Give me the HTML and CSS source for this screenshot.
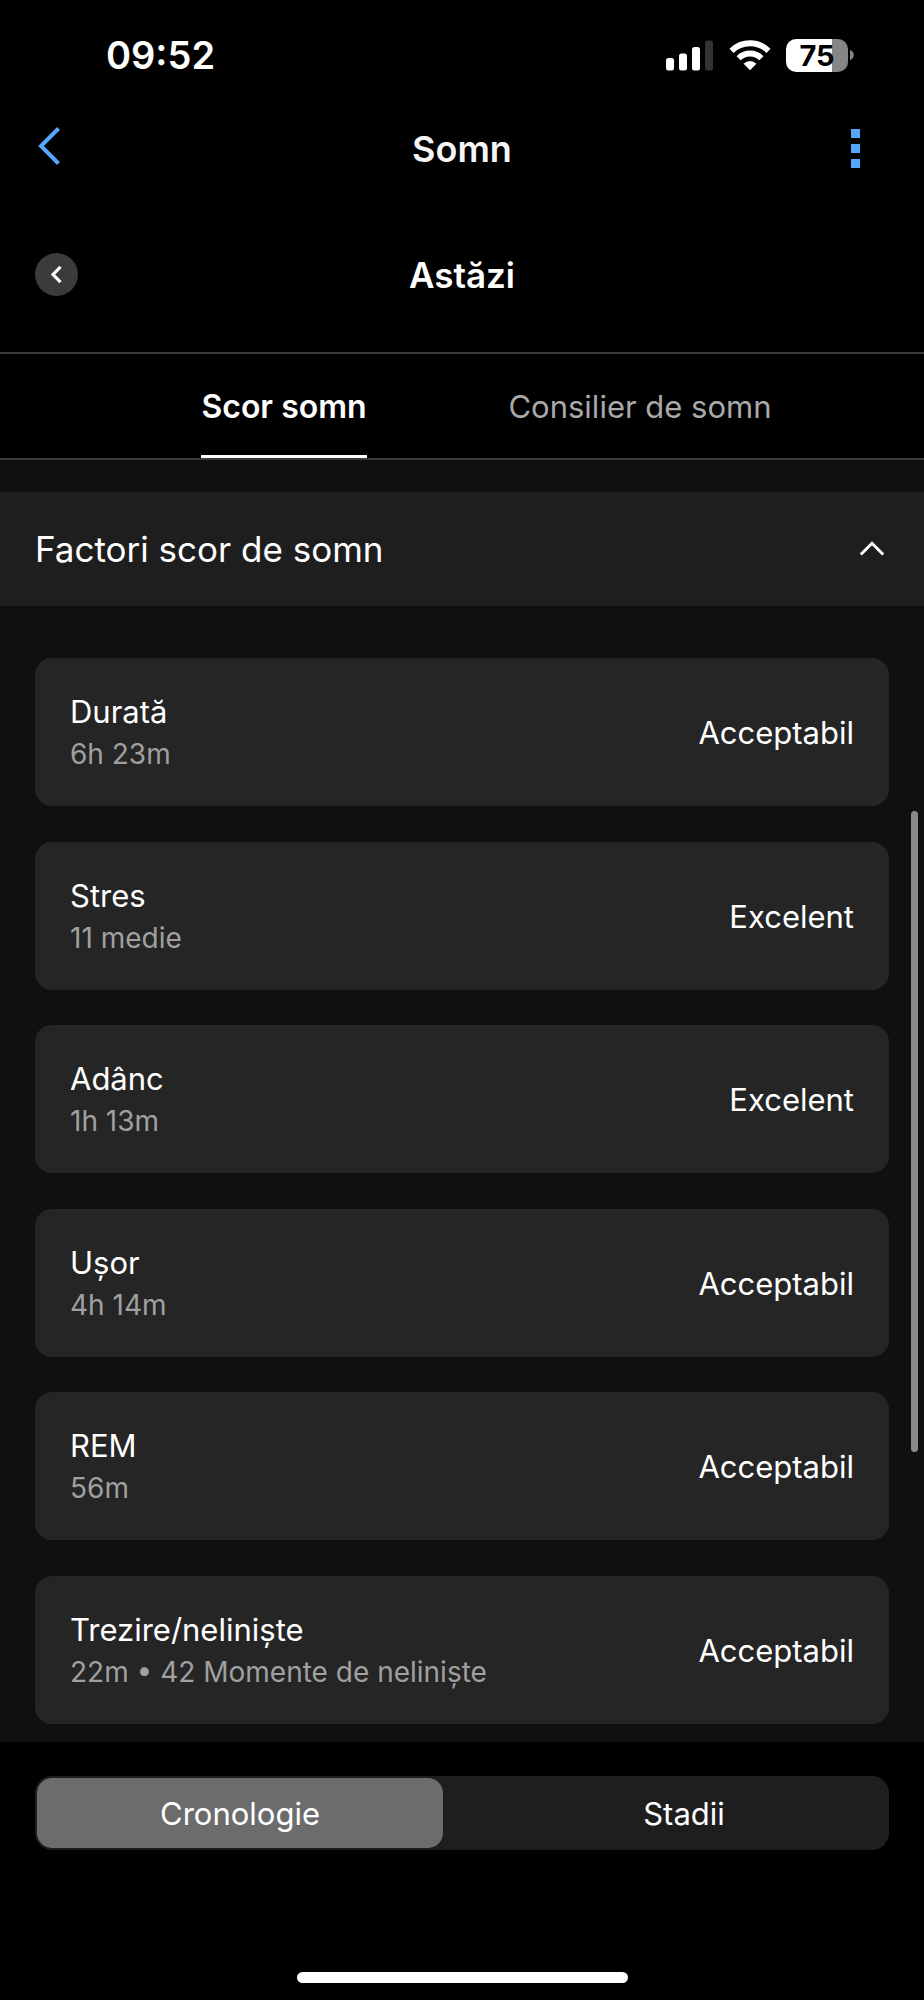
FILE: index.html
```html
<!DOCTYPE html>
<html lang="ro">
<head>
    <meta charset="UTF-8">
    <meta name="viewport" content="width=device-width, initial-scale=1.0">
    <title>Somn</title>
    <link rel="stylesheet" href="styles.css">
</head>
<body>
<div class="status-bar">
    <span class="time">09:52</span>
    <div class="status-icons">
        <svg class="signal" width="48" height="32" viewBox="0 0 48 32" fill="#fff">
            <rect x="0" y="19" width="8" height="12.5" rx="2.5"/>
            <rect x="13" y="14.5" width="8" height="17" rx="2.5"/>
            <rect x="26" y="8" width="8" height="23.5" rx="2.5"/>
            <rect x="39" y="1.5" width="8" height="30" rx="2.5" fill="#333"/>
        </svg>
        <svg class="wifi" width="42" height="32" viewBox="0 0 42 32" fill="none" stroke="#fff" stroke-width="5.8">
            <path d="M2.5 11.8 A26.5 26.5 0 0 1 39.5 11.8"/>
            <path d="M9.6 19.2 A16.2 16.2 0 0 1 32.4 19.2"/>
            <path d="M14.6 24.7 A9.2 9.2 0 0 1 27.4 24.7 L21 31.2 Z" fill="#fff" stroke="none"/>
        </svg>
        <div class="battery">
            <span class="battery-level">75</span>
            <svg class="battery-tip" width="4" height="10" viewBox="0 0 4 10">
                <path d="M0 0 C5 1.5 5 8.5 0 10 Z" fill="#868686"/>
            </svg>
        </div>
    </div>
</div>

<header class="nav-bar">
    <button type="button" class="icon-button" aria-label="Înapoi">
        <svg width="26" height="44" viewBox="0 0 26 44" fill="none" stroke="#56a7fb" stroke-width="4">
            <path d="M23.5 1.5 L6 19 L23.5 36.5"/>
        </svg>
    </button>
    <h1>Somn</h1>
    <button type="button" class="icon-button menu-button" aria-label="Meniu">
        <svg width="9" height="40" viewBox="0 0 9 40" fill="#56a7fb">
            <rect x="0" y="0" width="9" height="9"/>
            <rect x="0" y="15" width="9" height="9"/>
            <rect x="0" y="30" width="9" height="9"/>
        </svg>
    </button>
</header>

<div class="date-bar">
    <button type="button" class="prev-day" aria-label="Ziua precedentă">
        <svg width="43" height="43" viewBox="0 0 43 43" fill="none" stroke="#fff" stroke-width="3.2">
            <path d="M25.5 13.8 L18 21.5 L25.5 29.2"/>
        </svg>
    </button>
    <h2>Astăzi</h2>
</div>

<nav class="tabs" role="tablist">
    <button type="button" class="tab active" role="tab" aria-selected="true">Scor somn</button>
    <button type="button" class="tab" role="tab" aria-selected="false">Consilier de somn</button>
</nav>

<main class="content">
    <button type="button" class="section-header" aria-expanded="true">
        Factori scor de somn
        <svg width="26" height="16" viewBox="0 0 26 16" fill="none" stroke="#fff" stroke-width="3">
            <path d="M1.8 13.5 L13 2.3 L24.2 13.5"/>
        </svg>
    </button>

    <ul class="factors">
        <li class="card">
            <div>
                <p class="name">Durată</p>
                <p class="detail">6h 23m</p>
            </div>
            <span class="rating">Acceptabil</span>
        </li>
        <li class="card">
            <div>
                <p class="name">Stres</p>
                <p class="detail">11 medie</p>
            </div>
            <span class="rating">Excelent</span>
        </li>
        <li class="card">
            <div>
                <p class="name">Adânc</p>
                <p class="detail">1h 13m</p>
            </div>
            <span class="rating">Excelent</span>
        </li>
        <li class="card">
            <div>
                <p class="name">Ușor</p>
                <p class="detail">4h 14m</p>
            </div>
            <span class="rating">Acceptabil</span>
        </li>
        <li class="card">
            <div>
                <p class="name">REM</p>
                <p class="detail">56m</p>
            </div>
            <span class="rating">Acceptabil</span>
        </li>
        <li class="card">
            <div>
                <p class="name">Trezire/neliniște</p>
                <p class="detail">22m • 42 Momente de neliniște</p>
            </div>
            <span class="rating">Acceptabil</span>
        </li>
    </ul>
    <div class="scroll-thumb"></div>
</main>

<footer class="bottom-bar">
    <div class="segments">
        <input type="radio" id="cronologie" name="view" checked>
        <label for="cronologie">Cronologie</label>
        <input type="radio" id="stadii" name="view">
        <label for="stadii">Stadii</label>
    </div>
    <div class="home-indicator"></div>
</footer>
</body>
</html>
```

FILE: styles.css
```css
* {
    box-sizing: border-box;
}

body {
    display: flex;
    flex-direction: column;
    min-height: 100vh;
    margin: 0;
    background-color: #000;
    color: #fff;
    font-family: Inter, 'Liberation Sans', sans-serif;
    font-size: 31px;
    line-height: 42px;
}

h1, h2, p, ul {
    margin: 0;
    padding: 0;
}

button {
    padding: 0;
    border: none;
    background: none;
    color: inherit;
    font: inherit;
    cursor: pointer;
}

svg {
    display: block;
}

/* Status bar */
.status-bar {
    display: flex;
    align-items: center;
    justify-content: space-between;
    height: 110px;
    padding: 0 70px 0 106px;
}

.time {
    font-size: 38px;
    font-weight: 600;
}

.status-icons {
    display: flex;
    align-items: center;
    gap: 15px;
}

.battery {
    display: flex;
    align-items: center;
    gap: 2px;
}

.battery-level {
    width: 62px;
    border-radius: 10px;
    background: linear-gradient(to right, #fff 75%, #868686 75%);
    color: #000;
    font-size: 29px;
    font-weight: 700;
    line-height: 33px;
    text-align: center;
}

/* Title and date */
.nav-bar, .date-bar {
    display: grid;
    grid-template-columns: 60px 1fr 60px;
    align-items: center;
    padding: 0 35px;
    text-align: center;
}

.nav-bar {
    height: 78px;
}

.menu-button {
    justify-self: end;
    padding-right: 29px;
}

h1, h2 {
    font-size: 35px;
    font-weight: 600;
}

h1 {
    color: #f5f5f5;
    font-size: 36px;
}

.date-bar {
    height: 164px;
    padding-top: 9px;
}

.prev-day {
    width: 43px;
    height: 43px;
    border-radius: 50%;
    background-color: #3b3b3b;
}

/* Tabs */
.tabs {
    display: grid;
    grid-template-columns: 1fr 1fr;
    justify-items: center;
    padding: 0 106px;
    border-top: 2px solid #3a3a3a;
    border-bottom: 2px solid #3a3a3a;
}

.tab {
    padding: 32px 0 27px;
    border-bottom: 3px solid transparent;
    color: #a9a9a9;
    white-space: nowrap;
}

.tab.active {
    border-bottom-color: #fff;
    color: #fff;
    font-size: 32px;
    font-weight: 600;
}

/* Sleep factors */
.content {
    position: relative;
    display: flex;
    flex: 1;
    flex-direction: column;
    padding: 32px 0 18px;
    background-color: #101010;
}

.section-header {
    display: flex;
    align-items: center;
    justify-content: space-between;
    height: 114px;
    padding: 0 39px 0 35px;
    background-color: #1e1e1e;
    font-size: 35px;
}

.factors {
    display: flex;
    flex: 1;
    flex-direction: column;
    justify-content: space-between;
    gap: 32px;
    padding: 52px 35px 0;
    list-style: none;
}

.card {
    display: flex;
    align-items: center;
    justify-content: space-between;
    padding: 33px 35px 31px;
    border-radius: 17px;
    background-color: #252525;
}

.detail {
    color: #a0a0a0;
    font-size: 28px;
}

.scroll-thumb {
    position: absolute;
    top: 351px;
    right: 6px;
    width: 7px;
    height: 50%;
    border-radius: 4px;
    background-color: #8a8a8a;
}

/* Bottom bar */
.bottom-bar {
    padding: 34px 35px 17px;
}

.segments {
    display: grid;
    grid-template-columns: 1fr 1fr;
    column-gap: 38px;
    padding: 2px;
    border-radius: 17px;
    background-color: #1e1e1e;
}

.segments input {
    position: absolute;
    opacity: 0;
}

.segments label {
    padding: 15px 0 13px;
    border-radius: 15px;
    text-align: center;
    cursor: pointer;
}

.segments input:checked + label {
    background-color: #6c6c6c;
}

.home-indicator {
    width: 331px;
    height: 11px;
    margin: 122px auto 0;
    border-radius: 6px;
    background-color: #fff;
}
```
